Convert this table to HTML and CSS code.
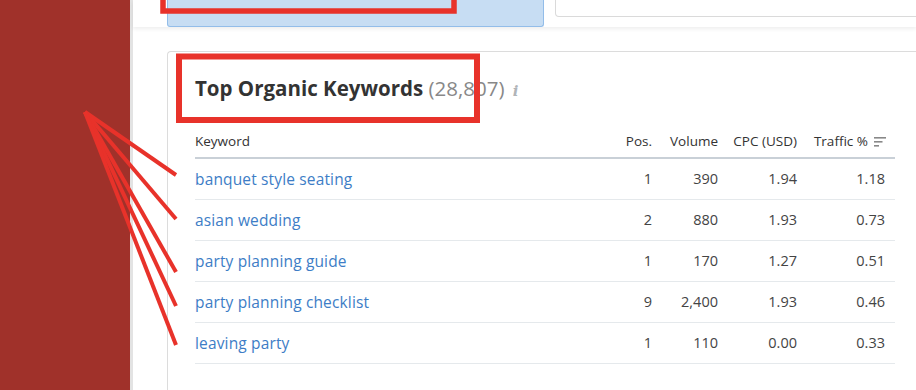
FILE: index.html
```html
<!DOCTYPE html>
<html lang="en">
<head>
    <meta charset="UTF-8">
    <meta name="viewport" content="width=device-width, initial-scale=1.0">
    <title>Top Organic Keywords</title>
    <link rel="stylesheet" href="styles.css">
</head>
<body>
    <div class="sidebar"></div>
    <div class="main">
        <div class="tabs">
            <div class="tab tab-active"></div>
            <div class="tab"></div>
        </div>

        <div class="card">
            <h2 class="card-title">Top Organic Keywords <span class="count">(28,807)</span> <span class="info">i</span></h2>

            <table class="keywords">
                <thead>
                    <tr>
                        <th class="col-keyword">Keyword</th>
                        <th class="col-pos">Pos.</th>
                        <th class="col-volume">Volume</th>
                        <th class="col-cpc">CPC (USD)</th>
                        <th class="col-traffic">Traffic %<svg class="sort-icon" width="12" height="10" viewBox="0 0 12 10">
                                <rect x="0" y="0" width="12" height="1.6" fill="#888"/>
                                <rect x="0" y="4" width="8.5" height="1.6" fill="#888"/>
                                <rect x="0" y="8" width="5" height="1.6" fill="#888"/>
                            </svg></th>
                    </tr>
                </thead>
                <tbody>
                    <tr>
                        <td><a href="#">banquet style seating</a></td>
                        <td>1</td><td>390</td><td>1.94</td><td>1.18</td>
                    </tr>
                    <tr>
                        <td><a href="#">asian wedding</a></td>
                        <td>2</td><td>880</td><td>1.93</td><td>0.73</td>
                    </tr>
                    <tr>
                        <td><a href="#">party planning guide</a></td>
                        <td>1</td><td>170</td><td>1.27</td><td>0.51</td>
                    </tr>
                    <tr>
                        <td><a href="#">party planning checklist</a></td>
                        <td>9</td><td>2,400</td><td>1.93</td><td>0.46</td>
                    </tr>
                    <tr>
                        <td><a href="#">leaving party</a></td>
                        <td>1</td><td>110</td><td>0.00</td><td>0.33</td>
                    </tr>
                </tbody>
            </table>
        </div>
    </div>

    <!-- annotation layer drawn over the screenshot -->
    <svg class="annotations" width="916" height="390" viewBox="0 0 916 390">
        <g fill="none" stroke="#e8322a">
            <rect x="163" y="-10" width="291" height="21" stroke-width="5.5"/>
            <rect x="179" y="56.5" width="298" height="63.5" stroke-width="6"/>
            <g stroke-width="4">
                <line x1="85" y1="112" x2="176" y2="175"/>
                <line x1="85" y1="112" x2="176" y2="219"/>
                <line x1="85" y1="112" x2="176" y2="272"/>
                <line x1="85" y1="112" x2="176" y2="306"/>
                <line x1="85" y1="112" x2="176" y2="345"/>
            </g>
        </g>
    </svg>
</body>
</html>
```

FILE: styles.css
```css
body {
    margin: 0;
    width: 916px;
    height: 390px;
    overflow: hidden;
    display: flex;
    font-family: 'Open Sans', 'Noto Sans', sans-serif;
    color: #333;
    background-color: #ffffff;
}
.sidebar {
    width: 130px;
    flex-shrink: 0;
    background-color: #a0312a;
}
.main {
    flex: 1;
    min-width: 0;
    border-left: 3px solid #e3e3e3;
    background-color: #ffffff;
}
.tabs {
    height: 27px;
    display: flex;
    align-items: flex-start;
    gap: 11px;
    padding-left: 34px;
    overflow: hidden;
    box-shadow: 0 2px 4px rgba(0, 0, 0, 0.07);
}
.tab {
    flex: 1;
    height: 16px;
    margin-right: -10px;
    border: 1px solid #dadada;
    border-top: none;
    border-radius: 0 0 0 4px;
    background-color: #ffffff;
}
.tab-active {
    flex: none;
    width: 375px;
    height: 26px;
    margin-right: 0;
    border-color: #93bde9;
    border-radius: 0 0 3px 3px;
    background-color: #c7ddf3;
}
.card {
    margin: 24px 0 0 34px;
    padding: 24px 0 0 27px;
    height: 314px;
    border: 1px solid #dcdcdc;
    border-right: none;
    border-bottom: none;
    border-radius: 4px 0 0 0;
}
.card-title {
    margin: 0 0 22px;
    font-size: 20.5px;
    line-height: 24px;
    font-weight: 700;
    color: #333;
}
.count {
    font-weight: 400;
    color: #888;
}
.info {
    font-family: 'DejaVu Serif', serif;
    font-style: italic;
    font-weight: 700;
    font-size: 15px;
    color: #b0b4b8;
    margin-left: 3px;
}
.keywords {
    width: 700px;
    border-collapse: collapse;
    table-layout: fixed;
}
.keywords th,
.keywords td {
    box-sizing: border-box;
    padding: 0;
    text-align: right;
    white-space: nowrap;
}
.keywords th {
    height: 33px;
    font-size: 13.5px;
    font-weight: 400;
    color: #333;
    border-bottom: 2px solid #c9d0d7;
}
.keywords th.col-keyword {
    text-align: left;
}
.col-keyword { width: 417px; }
.col-pos { width: 40px; }
.col-volume { width: 66px; }
.col-cpc { width: 79px; }
.col-traffic { width: 98px; }
.keywords th.col-traffic {
    padding-right: 9px;
}
.sort-icon {
    margin-left: 6px;
    vertical-align: -1px;
}
.keywords td {
    height: 41px;
    font-size: 14.5px;
    color: #444;
    border-bottom: 1px solid #e5e9ec;
}
.keywords td:first-child {
    text-align: left;
    font-size: 15.5px;
    letter-spacing: 0.15px;
}
.keywords td:last-child {
    padding-right: 10px;
}
.keywords a {
    color: #3d7dc6;
    text-decoration: none;
}
.annotations {
    position: absolute;
    top: 0;
    left: 0;
    pointer-events: none;
}
```
